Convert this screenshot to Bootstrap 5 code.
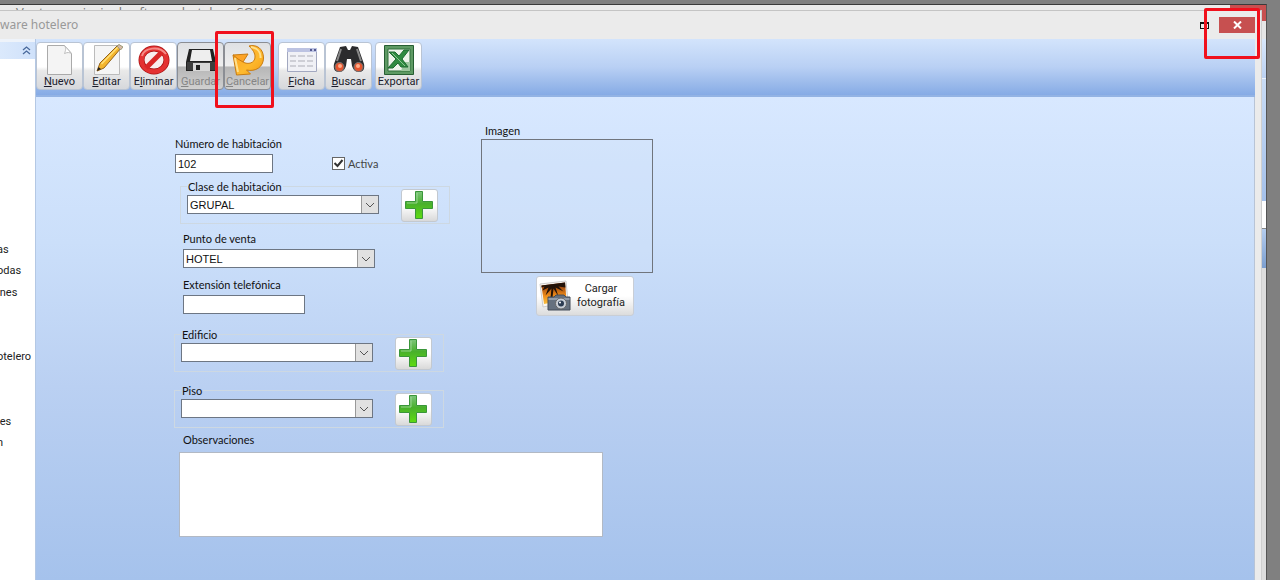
<!DOCTYPE html>
<html lang="es">
<head>
<meta charset="utf-8">
<meta name="viewport" content="width=device-width, initial-scale=1">
<title>Software hotelero</title>
<link href="https://cdn.jsdelivr.net/npm/bootstrap@5.3.0/dist/css/bootstrap.min.css" rel="stylesheet">
<style>
  body { background: #808080; font-family: Roboto, "Liberation Sans", sans-serif; font-size: 11px; line-height: 14px; color: #111; }
  .desktop { min-height: 100vh; padding: 4px 13px 0 0; }
  .back-window { background: #ebebeb; border-top: 1px solid #3a3a3a; border-right: 1px solid #555; }
  .back-title { height: 5px; font: 13px/14px "Open Sans", sans-serif; color: #777; padding-left: 16px; }
  .back-close { width: 36px; background: #c75050; }
  .back-edge { width: 4px; background: linear-gradient(#c75050 11px, #e6e6e6 11px 29px, #d9e8fb 29px, #bcd2f2 68px, #eef4fc 68px 69px, #c9dcf5 69px, #a5c1ea 191px, #fff 191px 218px, #888 218px 219px, #b5cdee 219px, #7c9fd0 258px, #ddd 258px); }
  .front-window { background: #ebebeb; border-top: 1px solid #c4c4c4; border-right: 1px solid #cfcfcf; padding-right: 6px; min-width: 0; }
  .title-bar { height: 28px; font: 12px/28px "Noto Sans", sans-serif; color: #999; }
  .maximize { width: 9px; height: 7px; border: 1px solid #111; border-top-width: 2px; background: none; margin-right: 10px; }
  .close-window { width: 36px; height: 16px; background: #c75050; }
  .side-panel { width: 36px; background: #fff; border-right: 1px solid #b4c8e4; }
  .side-head { height: 20px; border-top: 3px solid #eef3fa; background: linear-gradient(90deg, #dbe9fc, #cfe1fa); padding-right: 4px; }
  .side-links { display: grid; grid-auto-rows: 1fr; height: 215px; margin-top: 180px; margin-left: -3px; }
  .side-links a { color: #222; text-decoration: none; white-space: nowrap; }
  .tool-bar { height: 58px; padding-top: 3px; background: linear-gradient(#d3e4fc, #b9d0f4 50%, #86abe5); border-bottom: 2px solid #93b3e4; }
  .tool-set { display: flex; margin-right: 7px; }
  .tool-set.near { margin-right: 3px; }
  .tool { width: 47px; height: 48px; padding: 0; border: 1px solid #b9c4d4; border-radius: 4px; background: linear-gradient(#fff 52%, #e9e9e9 60%, #d6d8dc); color: #1b1b2b; overflow: hidden; white-space: nowrap; }
  .tool svg { display: block; width: 32px; height: 32px; margin: 0 auto -1px; }
  .tool:disabled { background: linear-gradient(#dfe1e4, #eeeeee 50%, #b6b6b6 52%, #d0d0d0); border-color: #8b8e94; color: #858585; }
  .highlight { position: absolute; border: 3px solid #f0101c; border-radius: 2px; z-index: 5; pointer-events: none; }
  .around-tool { inset: -11px -3px -18px -9px; }
  .around-close { top: -3px; right: -5px; width: 56px; height: 51px; }
  .work-area { background: linear-gradient(#d8e8ff, #cbdffa 30%, #bad0f2 60%, #a5c2ec); border-right: 1px solid #b8c4d6; padding: 27px 16px 31px 137px; font-family: Lato, Roboto, sans-serif; }
  .form-side { width: 308px; padding-top: 13px; }
  .field { display: flex; flex-direction: column; align-items: flex-start; gap: 3px; }
  .number-row { display: flex; gap: 50px; margin-bottom: 13px; padding-left: 2px; }
  .room-class { margin-left: 7px; margin-bottom: 8px; }
  .sales-point { margin-left: 10px; margin-bottom: 10px; }
  .phone { margin-left: 10px; margin-bottom: 20px; }
  .building { margin-left: 1px; margin-bottom: 18px; }
  .floor-no { margin-left: 1px; margin-bottom: 5px; }
  .notes-field { margin-left: 6px; gap: 5px; }
  .notes-field label { padding-left: 4px; }
  .box { border: 1px solid #6d7683; border-radius: 0; background-color: #fff; height: 19px; padding: 0 2px; font: 11px/14px "Liberation Sans", Arial, sans-serif; color: #111; }
  .short { width: 98px; }
  .medium { width: 122px; }
  .picker { appearance: none; width: 192px; background: #fff url("data:image/svg+xml,%3Csvg xmlns='http://www.w3.org/2000/svg' width='17' height='17'%3E%3Cpath fill='%23e1e1e1' d='M0 0h17v17H0z'/%3E%3Cpath d='M.5 0v17' stroke='%23999'/%3E%3Cpath d='M5 7l4 4 4-4' fill='none' stroke='%23555'/%3E%3C/svg%3E") no-repeat right center; }
  .group { border: 1px solid #cdd8e2; width: 270px; height: 38px; padding: 0 0 0 6px; }
  .group legend { float: none; width: auto; height: 1px; margin: 0; padding: 0 1px; font-size: 11px; line-height: 1px; }
  .group .picker { margin-top: 8px; }
  .add { width: 37px; height: 33px; margin: 2px 0 0 22px; padding: 0 2px 2px 0; border: 1px solid #c3c9d0; border-radius: 3px; background: linear-gradient(#fff 50%, #d9d9d9); }
  .add svg { display: block; margin: auto; }
  .tick { appearance: none; width: 13px; height: 13px; margin: 0; border: 1px solid #666; background: #fff url("data:image/svg+xml,%3Csvg xmlns='http://www.w3.org/2000/svg' width='11' height='11'%3E%3Cpath d='M1.500 5l3 3 5-6' fill='none' stroke='%23333' stroke-width='2'/%3E%3C/svg%3E") center no-repeat; }
  .active-check { display: flex; align-items: center; align-self: flex-end; height: 19px; }
  .active-label { color: #444; padding-left: 3px; }
  .photo { width: 172px; height: 134px; margin-top: 1px; border: 1px solid #70757d; background: #d0e2f84d; }
  .load { width: 98px; height: 40px; margin: 3px 0 0 55px; padding: 0 8px 0 2px; border: 1px solid #c9ced6; border-radius: 3px; background: linear-gradient(#fff 50%, #dcdcdc); color: #222; font-family: Roboto, sans-serif; }
  .notes { width: 424px; height: 85px; border-color: #b2b9c4; resize: none; }
</style>
</head>
<body>
<svg class="position-absolute" width="0" height="0">
  <defs>
    <linearGradient id="green" x2="0" y2="1"><stop stop-color="#7cc47a"/><stop offset=".45" stop-color="#48b02c"/><stop offset="1" stop-color="#5fdc10"/></linearGradient>
    <linearGradient id="gold" x2="1" y2="1"><stop stop-color="#fd9f20"/><stop offset=".6" stop-color="#fdb92e"/><stop offset="1" stop-color="#f59b10"/></linearGradient>
    <linearGradient id="sunset" x2="0" y2="1"><stop stop-color="#7a2a08"/><stop offset=".6" stop-color="#ee8a18"/><stop offset="1" stop-color="#f8c040"/></linearGradient>
  </defs>
  <symbol id="plus" viewBox="0 0 30 30"><path d="M11.500 1.500h7v10h10v7h-10v10h-7v-10h-10v-7h10z" fill="url(#green)" stroke="#3a963a" stroke-linejoin="round"/><path d="M13 3v10H3" fill="none" stroke="#b5e2b0" opacity=".7"/></symbol>
</svg>
<div class="desktop d-flex">
  <div class="back-window d-flex flex-column flex-grow-1">
    <div class="back-title d-flex justify-content-between overflow-hidden"><span>Ventana principal software hotelero SOHO</span><div class="back-close"></div></div>
    <div class="d-flex flex-grow-1">
      <div class="front-window d-flex flex-column flex-grow-1">
        <header class="title-bar d-flex align-items-center position-relative">
          <span class="flex-grow-1">ware hotelero</span>
          <button class="maximize p-0" aria-label="Maximizar"></button>
          <button class="close-window border-0 p-0 d-flex align-items-center justify-content-center" aria-label="Cerrar"><svg width="9" height="8" viewBox="0 0 9 8"><path d="M1 .5l7 7M8 .5l-7 7" stroke="#fff" stroke-width="2"/></svg></button>
          <div class="highlight around-close"></div>
        </header>
        <div class="d-flex flex-grow-1">
          <nav class="side-panel flex-shrink-0 overflow-hidden">
            <div class="side-head d-flex justify-content-end align-items-start pt-1"><svg width="9" height="9" viewBox="0 0 9 9"><path d="M1 4l3.500-3L8 4M1 8l3.500-3L8 8" fill="none" stroke="#4a6a9c" stroke-width="1.300"/></svg></div>
            <div class="side-links align-items-center">
              <a href="#">as</a><a href="#">odas</a><a href="#">&nbsp;nes</a><a href="#">.</a><span></span><a href="#">otelero</a><span></span><span></span><a href="#">&nbsp;es</a><a href="#">n</a>
            </div>
          </nav>
          <main class="d-flex flex-column flex-grow-1">
            <div class="tool-bar d-flex align-items-start">
              <div class="tool-set">
                <button class="tool"><svg viewBox="0 0 32 32"><path d="M3.500 1.500h17l7 8v21h-24z" fill="#f4f4f4" stroke="#aaa"/><path d="M20.500 1.500c2 3 1 5 0 8 3-1.500 5-1 7 0z" fill="#fff" stroke="#bbb"/></svg><u>N</u>uevo</button>
                <button class="tool"><svg viewBox="0 0 32 32"><path d="M3.500 1.500h25v29h-25z" fill="#f5f5f5" stroke="#bbb"/><path d="M6 27l3-8L27 1l3 3-17 20z" fill="#f4b52c" stroke="#95641c"/><path d="M10.500 20L27 3" stroke="#ffe07a" stroke-width="1.500"/><path d="M26 2l2-1.500 4 2.500-2.500 3z" fill="#d8b8a8" stroke="#997"/><path d="M6 27l1.500-4 2.500 2z" fill="#222"/></svg><u>E</u>ditar</button>
                <button class="tool"><svg viewBox="0 0 32 32"><ellipse cx="16" cy="16" rx="12.500" ry="11.500" fill="#f8eeee" stroke="#a81414" stroke-width="6"/><ellipse cx="16" cy="16" rx="12.500" ry="11.500" fill="none" stroke="#e43232" stroke-width="4.500"/><path d="M8 24L24 8" stroke="#d92727" stroke-width="5"/><path d="M4 12c2-8 17-11 24-2" fill="none" stroke="#f58b86" stroke-width="2"/></svg>E<u>l</u>iminar</button>
                <button class="tool" disabled><svg viewBox="0 0 32 32"><path d="M4 5h24l3 13v9H1v-9z" fill="#222"/><path d="M7 6h18l2 11H5z" fill="#eee"/><path d="M2 18h28v8H2z" fill="#3e3e3e"/><path d="M8 19h17v8H8z" fill="#d8d8d8"/><path d="M11 21h4v5h-4z" fill="#222"/></svg><u>G</u>uardar</button>
                <div class="position-relative">
                  <button class="tool" disabled><svg viewBox="0 0 32 32"><path d="M17 2C25 0 31.500 5 31.500 14c0 9-8 14-17 12l4 4-14 1L1 11l5 2 5 5c5 3 12 1 12-5 0-4-2-7-6-11z" fill="url(#gold)" stroke="#c87c12" stroke-linejoin="round"/><path d="M1 11l15-1-5 8-5-3z" fill="#fda426" stroke="#c87c12" stroke-linejoin="round"/><path d="M19 3c6 1 10 5 9.500 11M3 14l3 14" fill="none" stroke="#ffe08c" stroke-width="2"/></svg><u>C</u>ancelar</button>
                  <div class="highlight around-tool"></div>
                </div>
              </div>
              <div class="tool-set near">
                <button class="tool"><svg viewBox="0 0 32 32"><path d="M1.500 4.500h29v23h-29z" fill="#f0f1f6" stroke="#a2a8c0"/><path d="M1 4h30v4H1z" fill="#bcc3e2"/><path d="M24 6h2M28 6h2" stroke="#555a90" stroke-width="2"/><path d="M4 12h6M12 12h7M21 12h6M4 17h6M12 17h7M21 17h6M4 22h6M12 22h7M21 22h6" stroke="#c2c4cc" stroke-width="1.500"/></svg><u>F</u>icha</button>
                <button class="tool"><svg viewBox="0 0 32 32"><path d="M7 3l6-1 2 4h2l2-4 6 1 6 17c1 5-1 8-5 8-4 0-6-3-7-6l-1-7h-4l-1 7c-1 3-3 6-7 6s-6-3-5-8z" fill="#2b2b2d"/><path d="M8 5l-4 12M24 5l4 12" stroke="#888" stroke-width="2"/><circle cx="6.500" cy="23" r="4.500" fill="#e6542e" stroke="#777"/><circle cx="25.500" cy="23" r="4.500" fill="#e6542e" stroke="#777"/><circle cx="7" cy="22" r="2" fill="#ffad8a"/><circle cx="25" cy="22" r="2" fill="#ffad8a"/></svg><u>B</u>uscar</button>
              </div>
              <div class="tool-set">
                <button class="tool"><svg viewBox="0 0 32 32"><path d="M1.500 1.500h29v29h-29z" fill="#5e9a64" stroke="#265e32"/><path d="M5 5h22v22H5z" fill="#edf4ea" stroke="#2f6e3a"/><path d="M21 18h6v9h-9z" fill="#9cc79e"/><path d="M6 8h6l4 4 5-6h5l-7 9 6 8h-7l-3-4-5 5H5l8-9z" fill="#2f8b40" stroke="#1e6b30"/><path d="M9 9l13 13" stroke="#8cc592"/></svg>Exportar</button>
              </div>
            </div>
            <form class="work-area flex-grow-1">
              <div class="d-flex align-items-start">
                <div class="form-side flex-shrink-0">
                  <div class="number-row">
                    <div class="field">
                      <label for="numero">Número de habitación</label>
                      <input id="numero" class="box short" value="102">
                    </div>
                    <div class="active-check"><input type="checkbox" class="tick" id="activa" checked><label for="activa" class="active-label">Activa</label></div>
                  </div>
                  <fieldset class="group room-class">
                    <legend><label for="clase">Clase de habitación</label></legend>
                    <div class="d-flex align-items-start"><select id="clase" class="box picker"><option>GRUPAL</option></select><button type="button" class="add" aria-label="Agregar clase"><svg width="30" height="30"><use href="#plus"/></svg></button></div>
                  </fieldset>
                  <div class="field sales-point"><label for="punto">Punto de venta</label><select id="punto" class="box picker"><option>HOTEL</option></select></div>
                  <div class="field phone"><label for="extension">Extensión telefónica</label><input id="extension" class="box medium"></div>
                  <fieldset class="group building">
                    <legend><label for="edificio">Edificio</label></legend>
                    <div class="d-flex align-items-start"><select id="edificio" class="box picker"><option></option></select><button type="button" class="add" aria-label="Agregar edificio"><svg width="30" height="30"><use href="#plus"/></svg></button></div>
                  </fieldset>
                  <fieldset class="group floor-no">
                    <legend><label for="piso">Piso</label></legend>
                    <div class="d-flex align-items-start"><select id="piso" class="box picker"><option></option></select><button type="button" class="add" aria-label="Agregar piso"><svg width="30" height="30"><use href="#plus"/></svg></button></div>
                  </fieldset>
                </div>
                <div>
                  <div class="ps-1">Imagen</div>
                  <div class="photo"></div>
                  <button type="button" class="load d-flex align-items-center justify-content-between">
                    <svg width="32" height="32" viewBox="0 0 32 32"><path d="M1 4l26-3 2 21-25 5z" fill="#faf6f0" stroke="#ccc"/><path d="M2.500 5.500L26 2.500 27.500 20 5 24z" fill="url(#sunset)"/><path d="M2.500 5.500L26 2.500l.5 5-7-1 5 5-8-4 3 9-5-8-1 9h-2l1-9-6 7 3-8-6 3 2-4-3 1z" fill="#221208"/><path d="M9 17h6l2-2h8l2 2h4v13H9z" fill="#66717f" stroke="#454d58"/><path d="M9.500 18h21v2h-21z" fill="#929dab"/><circle cx="22" cy="23.500" r="5.500" fill="#c8ced6" stroke="#666"/><circle cx="22" cy="23.500" r="3" fill="#2c3c52"/><circle cx="21" cy="22.500" r="1" fill="#fff"/></svg>
                    <span>Cargar<br>fotografía</span>
                  </button>
                </div>
              </div>
              <div class="field notes-field"><label for="notas">Observaciones</label><textarea id="notas" class="box notes"></textarea></div>
            </form>
          </main>
        </div>
      </div>
      <div class="back-edge"></div>
    </div>
  </div>
</div>
<script src="https://cdn.jsdelivr.net/npm/bootstrap@5.3.0/dist/js/bootstrap.bundle.min.js"></script>
</body>
</html>
